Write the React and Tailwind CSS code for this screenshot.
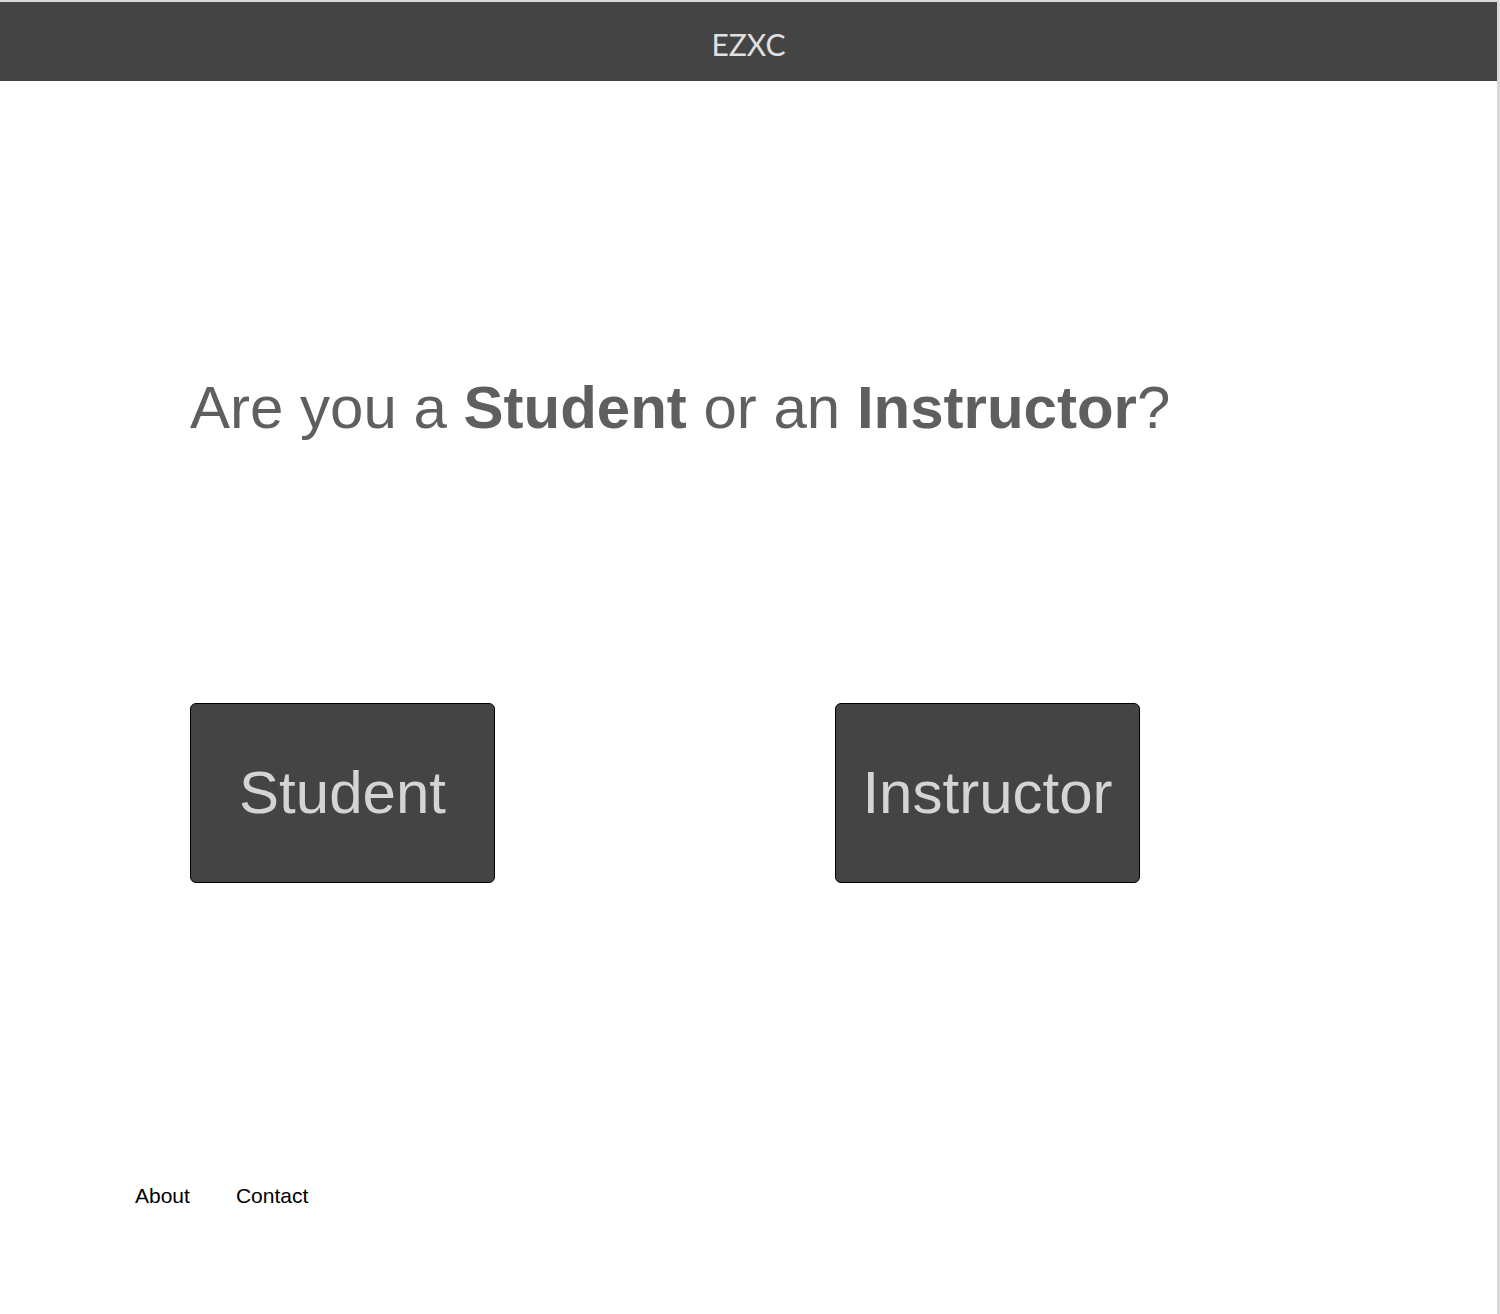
export default function App() {
  return (
    <div className="min-h-[1314px] bg-white border-t-2 border-r-[3px] border-[#d9d9d9] font-['Liberation_Sans',Arial,sans-serif]">
      <header className="h-[79px] bg-[#444444] flex items-center justify-center">
        <span className="text-[30px] text-[#e0e0e0] font-['Lato',sans-serif] pt-[6px]">EZXC</span>
      </header>

      <main className="pl-[190px]">
        <h1 className="mt-[297px] text-[60px] leading-none text-[#5f5f5f]">
          Are you a <b>Student</b> or an <b>Instructor</b>?
        </h1>

        <div className="mt-[265px] flex gap-[340px]">
          <button className="w-[305px] h-[180px] bg-[#444444] border border-black rounded-[6px] text-[60px] text-[#d4d4d4]">
            Student
          </button>
          <button className="w-[305px] h-[180px] bg-[#444444] border border-black rounded-[6px] text-[60px] text-[#d4d4d4]">
            Instructor
          </button>
        </div>
      </main>

      <footer className="mt-[297px] pl-[135px] flex gap-[46px] text-[21px] text-black">
        <a href="#">About</a>
        <a href="#">Contact</a>
      </footer>
    </div>
  );
}
